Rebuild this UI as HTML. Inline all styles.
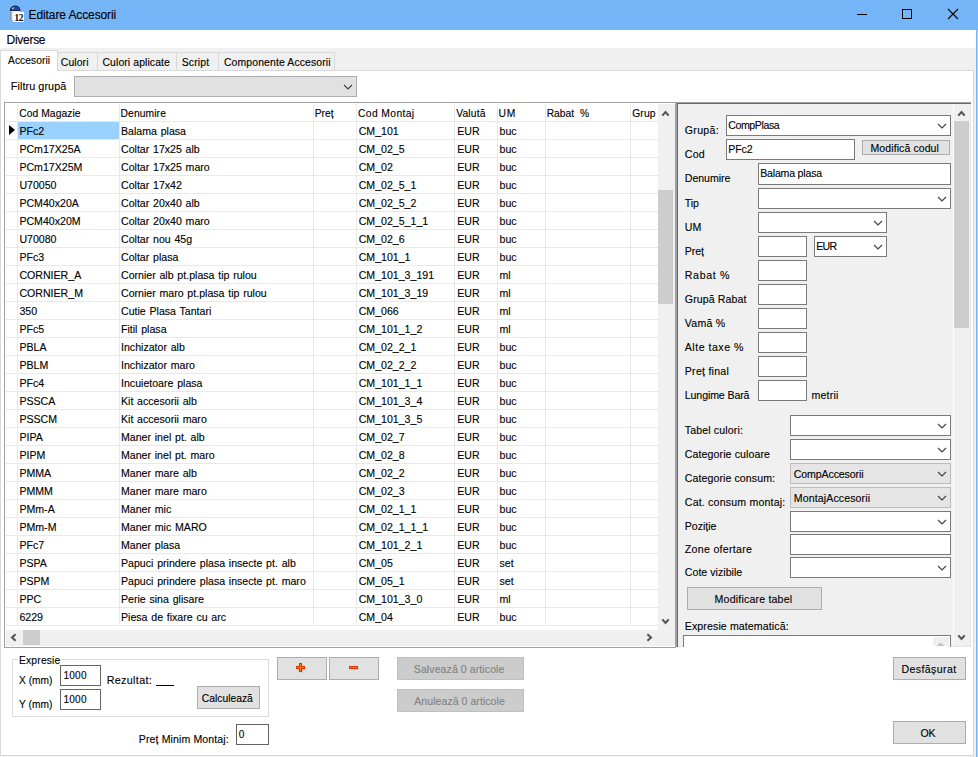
<!DOCTYPE html><html><head><meta charset="utf-8"><style>
html,body{margin:0;padding:0;}
body{width:978px;height:757px;overflow:hidden;position:relative;background:#f0f0f0;font-family:"Liberation Sans",sans-serif;}
.a{position:absolute;}
.t{position:absolute;white-space:nowrap;line-height:13px;-webkit-text-stroke:0.12px currentColor;}
</style></head><body>
<div class="a" style="left:976px;top:0px;width:1px;height:757px;background:#74b6f8"></div>
<div class="a" style="left:977px;top:0px;width:1px;height:757px;background:#cfcfcf"></div>
<div class="a" style="left:0px;top:0px;width:978px;height:30px;background:#74b6f8"></div>
<div class="t" style="left:28.60px;top:9px;font-size:12px;color:#000;letter-spacing:-0.109px;">Editare Accesorii</div>
<svg class="a" style="left:8px;top:4px" width="18" height="20" viewBox="0 0 18 20">
<rect x="4.9" y="7.9" width="11" height="10" fill="#ffffff"/>
<path d="M2.3 6.8 Q2.5 2 7.2 2 Q11.9 2 12 6.8 Z" fill="#1d43c4" stroke="#111" stroke-width="0.9"/>
<path d="M4.3 4.8 L5.8 3.6" stroke="#e0e8ff" stroke-width="1.1"/>
<rect x="2.3" y="7" width="9.7" height="1" fill="#e8e8e8"/>
<rect x="2.2" y="7.2" width="1.3" height="9.3" fill="#8a8a8a"/>
<rect x="3.5" y="8" width="2.5" height="8.3" fill="#cfe0f6"/>
<rect x="4.9" y="8" width="11" height="10" fill="#fff"/>
<text x="6.2" y="16.7" font-family="Liberation Serif" font-weight="bold" font-size="10" fill="#111" letter-spacing="-0.6">12</text>
</svg>
<div class="a" style="left:857px;top:14px;width:10px;height:1px;background:#000"></div>
<div class="a" style="left:902px;top:9px;width:10px;height:10px;border:1px solid #000;box-sizing:border-box"></div>
<svg class="a" style="left:947px;top:8px" width="12" height="12"><path d="M1 1 L11 11 M11 1 L1 11" stroke="#000" stroke-width="1.1"/></svg>
<div class="a" style="left:0px;top:30px;width:976px;height:18px;background:#fff"></div>
<div class="t" style="left:6.60px;top:34px;font-size:12px;color:#000;letter-spacing:-0.292px;">Diverse</div>
<div class="a" style="left:0px;top:70px;width:974px;height:686px;background:#fff;border:1px solid #d9d9d9;box-sizing:border-box"></div>
<div class="a" style="left:57px;top:52px;width:41px;height:19px;background:#f0f0f0;border:1px solid #d9d9d9;box-sizing:border-box"></div>
<div class="a" style="left:97px;top:52px;width:80px;height:19px;background:#f0f0f0;border:1px solid #d9d9d9;box-sizing:border-box"></div>
<div class="a" style="left:176px;top:52px;width:43px;height:19px;background:#f0f0f0;border:1px solid #d9d9d9;box-sizing:border-box"></div>
<div class="a" style="left:218px;top:52px;width:117px;height:19px;background:#f0f0f0;border:1px solid #d9d9d9;box-sizing:border-box"></div>
<div class="t" style="left:60.80px;top:56px;font-size:10.45px;color:#000;letter-spacing:0.090px;">Culori</div>
<div class="t" style="left:102.50px;top:56px;font-size:10.45px;color:#000;letter-spacing:0.086px;">Culori aplicate</div>
<div class="t" style="left:181.70px;top:56px;font-size:10.45px;color:#000;letter-spacing:0.170px;">Script</div>
<div class="t" style="left:223.90px;top:56px;font-size:10.45px;color:#000;letter-spacing:0.121px;">Componente Accesorii</div>
<div class="a" style="left:0px;top:50px;width:58px;height:21px;background:#fff;border:1px solid #d9d9d9;border-bottom:none;box-sizing:border-box"></div>
<div class="t" style="left:8.10px;top:54px;font-size:10.2px;color:#000;letter-spacing:0.069px;">Accesorii</div>
<div class="t" style="left:10.80px;top:80px;font-size:10.8px;color:#000;letter-spacing:0.077px;">Filtru grupă</div>
<div class="a" style="left:74px;top:76px;width:283px;height:21px;background:#e1e1e1;border:1px solid #adadad;box-sizing:border-box"></div>
<svg class="a" style="left:343.0px;top:84.0px" width="10" height="6"><path d="M1 1 L5.0 5 L9 1" fill="none" stroke="#404040" stroke-width="1.1"/></svg>
<div class="a" style="left:4px;top:102px;width:672px;height:546px;background:#fff;border:1px solid #a0a0a0;box-sizing:border-box"></div>
<div class="a" style="left:18px;top:122px;width:101px;height:17px;background:#99d1ff"></div>
<div class="a" style="left:6px;top:121px;width:652px;height:1px;background:#e9e9e9"></div>
<div class="a" style="left:6px;top:139px;width:652px;height:1px;background:#e9e9e9"></div>
<div class="a" style="left:6px;top:157px;width:652px;height:1px;background:#e9e9e9"></div>
<div class="a" style="left:6px;top:175px;width:652px;height:1px;background:#e9e9e9"></div>
<div class="a" style="left:6px;top:193px;width:652px;height:1px;background:#e9e9e9"></div>
<div class="a" style="left:6px;top:211px;width:652px;height:1px;background:#e9e9e9"></div>
<div class="a" style="left:6px;top:229px;width:652px;height:1px;background:#e9e9e9"></div>
<div class="a" style="left:6px;top:247px;width:652px;height:1px;background:#e9e9e9"></div>
<div class="a" style="left:6px;top:265px;width:652px;height:1px;background:#e9e9e9"></div>
<div class="a" style="left:6px;top:283px;width:652px;height:1px;background:#e9e9e9"></div>
<div class="a" style="left:6px;top:301px;width:652px;height:1px;background:#e9e9e9"></div>
<div class="a" style="left:6px;top:319px;width:652px;height:1px;background:#e9e9e9"></div>
<div class="a" style="left:6px;top:337px;width:652px;height:1px;background:#e9e9e9"></div>
<div class="a" style="left:6px;top:355px;width:652px;height:1px;background:#e9e9e9"></div>
<div class="a" style="left:6px;top:373px;width:652px;height:1px;background:#e9e9e9"></div>
<div class="a" style="left:6px;top:391px;width:652px;height:1px;background:#e9e9e9"></div>
<div class="a" style="left:6px;top:409px;width:652px;height:1px;background:#e9e9e9"></div>
<div class="a" style="left:6px;top:427px;width:652px;height:1px;background:#e9e9e9"></div>
<div class="a" style="left:6px;top:445px;width:652px;height:1px;background:#e9e9e9"></div>
<div class="a" style="left:6px;top:463px;width:652px;height:1px;background:#e9e9e9"></div>
<div class="a" style="left:6px;top:481px;width:652px;height:1px;background:#e9e9e9"></div>
<div class="a" style="left:6px;top:499px;width:652px;height:1px;background:#e9e9e9"></div>
<div class="a" style="left:6px;top:517px;width:652px;height:1px;background:#e9e9e9"></div>
<div class="a" style="left:6px;top:535px;width:652px;height:1px;background:#e9e9e9"></div>
<div class="a" style="left:6px;top:553px;width:652px;height:1px;background:#e9e9e9"></div>
<div class="a" style="left:6px;top:571px;width:652px;height:1px;background:#e9e9e9"></div>
<div class="a" style="left:6px;top:589px;width:652px;height:1px;background:#e9e9e9"></div>
<div class="a" style="left:6px;top:607px;width:652px;height:1px;background:#e9e9e9"></div>
<div class="a" style="left:6px;top:625px;width:652px;height:1px;background:#e9e9e9"></div>
<div class="a" style="left:17px;top:104px;width:1px;height:522px;background:#e9e9e9"></div>
<div class="a" style="left:119px;top:104px;width:1px;height:522px;background:#e9e9e9"></div>
<div class="a" style="left:313px;top:104px;width:1px;height:522px;background:#e9e9e9"></div>
<div class="a" style="left:356px;top:104px;width:1px;height:522px;background:#e9e9e9"></div>
<div class="a" style="left:454px;top:104px;width:1px;height:522px;background:#e9e9e9"></div>
<div class="a" style="left:497px;top:104px;width:1px;height:522px;background:#e9e9e9"></div>
<div class="a" style="left:545px;top:104px;width:1px;height:522px;background:#e9e9e9"></div>
<div class="a" style="left:630px;top:104px;width:1px;height:522px;background:#e9e9e9"></div>
<div class="t" style="left:19.20px;top:107px;font-size:10.3px;color:#000;letter-spacing:0.065px;">Cod Magazie</div>
<div class="t" style="left:120.50px;top:107px;font-size:10.3px;color:#000;letter-spacing:0.107px;">Denumire</div>
<div class="t" style="left:314.70px;top:107px;font-size:10.3px;color:#000;">Preț</div>
<div class="t" style="left:358.00px;top:107px;font-size:10.3px;color:#000;letter-spacing:0.389px;">Cod Montaj</div>
<div class="t" style="left:456.20px;top:107px;font-size:10.3px;color:#000;letter-spacing:0.150px;">Valută</div>
<div class="t" style="left:498.50px;top:107px;font-size:10.3px;color:#000;letter-spacing:0.750px;">UM</div>
<div class="t" style="left:546.70px;top:107px;font-size:10.3px;color:#000;word-spacing:3px;">Rabat %</div>
<div class="t" style="left:632.20px;top:107px;font-size:10.3px;color:#000;letter-spacing:0.167px;">Grup</div>
<div class="t" style="left:19.40px;top:125px;font-size:10.6px;color:#000;word-spacing:0.8px;">PFc2</div>
<div class="t" style="left:121.00px;top:125px;font-size:10.6px;color:#000;word-spacing:0.8px;">Balama plasa</div>
<div class="t" style="left:358.70px;top:125px;font-size:10.6px;color:#000;word-spacing:0.8px;">CM_101</div>
<div class="t" style="left:457.20px;top:125px;font-size:10.6px;color:#000;word-spacing:0.8px;">EUR</div>
<div class="t" style="left:499.50px;top:125px;font-size:10.6px;color:#000;word-spacing:0.8px;">buc</div>
<div class="t" style="left:19.40px;top:143px;font-size:10.6px;color:#000;word-spacing:0.8px;">PCm17X25A</div>
<div class="t" style="left:121.00px;top:143px;font-size:10.6px;color:#000;word-spacing:0.8px;">Coltar 17x25 alb</div>
<div class="t" style="left:358.70px;top:143px;font-size:10.6px;color:#000;word-spacing:0.8px;">CM_02_5</div>
<div class="t" style="left:457.20px;top:143px;font-size:10.6px;color:#000;word-spacing:0.8px;">EUR</div>
<div class="t" style="left:499.50px;top:143px;font-size:10.6px;color:#000;word-spacing:0.8px;">buc</div>
<div class="t" style="left:19.40px;top:161px;font-size:10.6px;color:#000;word-spacing:0.8px;">PCm17X25M</div>
<div class="t" style="left:121.00px;top:161px;font-size:10.6px;color:#000;word-spacing:0.8px;">Coltar 17x25 maro</div>
<div class="t" style="left:358.70px;top:161px;font-size:10.6px;color:#000;word-spacing:0.8px;">CM_02</div>
<div class="t" style="left:457.20px;top:161px;font-size:10.6px;color:#000;word-spacing:0.8px;">EUR</div>
<div class="t" style="left:499.50px;top:161px;font-size:10.6px;color:#000;word-spacing:0.8px;">buc</div>
<div class="t" style="left:19.40px;top:179px;font-size:10.6px;color:#000;word-spacing:0.8px;">U70050</div>
<div class="t" style="left:121.00px;top:179px;font-size:10.6px;color:#000;word-spacing:0.8px;">Coltar 17x42</div>
<div class="t" style="left:358.70px;top:179px;font-size:10.6px;color:#000;word-spacing:0.8px;">CM_02_5_1</div>
<div class="t" style="left:457.20px;top:179px;font-size:10.6px;color:#000;word-spacing:0.8px;">EUR</div>
<div class="t" style="left:499.50px;top:179px;font-size:10.6px;color:#000;word-spacing:0.8px;">buc</div>
<div class="t" style="left:19.40px;top:197px;font-size:10.6px;color:#000;word-spacing:0.8px;">PCM40x20A</div>
<div class="t" style="left:121.00px;top:197px;font-size:10.6px;color:#000;word-spacing:0.8px;">Coltar 20x40 alb</div>
<div class="t" style="left:358.70px;top:197px;font-size:10.6px;color:#000;word-spacing:0.8px;">CM_02_5_2</div>
<div class="t" style="left:457.20px;top:197px;font-size:10.6px;color:#000;word-spacing:0.8px;">EUR</div>
<div class="t" style="left:499.50px;top:197px;font-size:10.6px;color:#000;word-spacing:0.8px;">buc</div>
<div class="t" style="left:19.40px;top:215px;font-size:10.6px;color:#000;word-spacing:0.8px;">PCM40x20M</div>
<div class="t" style="left:121.00px;top:215px;font-size:10.6px;color:#000;word-spacing:0.8px;">Coltar 20x40 maro</div>
<div class="t" style="left:358.70px;top:215px;font-size:10.6px;color:#000;word-spacing:0.8px;">CM_02_5_1_1</div>
<div class="t" style="left:457.20px;top:215px;font-size:10.6px;color:#000;word-spacing:0.8px;">EUR</div>
<div class="t" style="left:499.50px;top:215px;font-size:10.6px;color:#000;word-spacing:0.8px;">buc</div>
<div class="t" style="left:19.40px;top:233px;font-size:10.6px;color:#000;word-spacing:0.8px;">U70080</div>
<div class="t" style="left:121.00px;top:233px;font-size:10.6px;color:#000;word-spacing:0.8px;">Coltar nou 45g</div>
<div class="t" style="left:358.70px;top:233px;font-size:10.6px;color:#000;word-spacing:0.8px;">CM_02_6</div>
<div class="t" style="left:457.20px;top:233px;font-size:10.6px;color:#000;word-spacing:0.8px;">EUR</div>
<div class="t" style="left:499.50px;top:233px;font-size:10.6px;color:#000;word-spacing:0.8px;">buc</div>
<div class="t" style="left:19.40px;top:251px;font-size:10.6px;color:#000;word-spacing:0.8px;">PFc3</div>
<div class="t" style="left:121.00px;top:251px;font-size:10.6px;color:#000;word-spacing:0.8px;">Coltar plasa</div>
<div class="t" style="left:358.70px;top:251px;font-size:10.6px;color:#000;word-spacing:0.8px;">CM_101_1</div>
<div class="t" style="left:457.20px;top:251px;font-size:10.6px;color:#000;word-spacing:0.8px;">EUR</div>
<div class="t" style="left:499.50px;top:251px;font-size:10.6px;color:#000;word-spacing:0.8px;">buc</div>
<div class="t" style="left:19.40px;top:269px;font-size:10.6px;color:#000;word-spacing:0.8px;">CORNIER_A</div>
<div class="t" style="left:121.00px;top:269px;font-size:10.6px;color:#000;word-spacing:0.8px;">Cornier alb pt.plasa tip rulou</div>
<div class="t" style="left:358.70px;top:269px;font-size:10.6px;color:#000;word-spacing:0.8px;">CM_101_3_191</div>
<div class="t" style="left:457.20px;top:269px;font-size:10.6px;color:#000;word-spacing:0.8px;">EUR</div>
<div class="t" style="left:499.50px;top:269px;font-size:10.6px;color:#000;word-spacing:0.8px;">ml</div>
<div class="t" style="left:19.40px;top:287px;font-size:10.6px;color:#000;word-spacing:0.8px;">CORNIER_M</div>
<div class="t" style="left:121.00px;top:287px;font-size:10.6px;color:#000;word-spacing:0.8px;">Cornier maro pt.plasa tip rulou</div>
<div class="t" style="left:358.70px;top:287px;font-size:10.6px;color:#000;word-spacing:0.8px;">CM_101_3_19</div>
<div class="t" style="left:457.20px;top:287px;font-size:10.6px;color:#000;word-spacing:0.8px;">EUR</div>
<div class="t" style="left:499.50px;top:287px;font-size:10.6px;color:#000;word-spacing:0.8px;">ml</div>
<div class="t" style="left:19.40px;top:305px;font-size:10.6px;color:#000;word-spacing:0.8px;">350</div>
<div class="t" style="left:121.00px;top:305px;font-size:10.6px;color:#000;word-spacing:0.8px;">Cutie Plasa Tantari</div>
<div class="t" style="left:358.70px;top:305px;font-size:10.6px;color:#000;word-spacing:0.8px;">CM_066</div>
<div class="t" style="left:457.20px;top:305px;font-size:10.6px;color:#000;word-spacing:0.8px;">EUR</div>
<div class="t" style="left:499.50px;top:305px;font-size:10.6px;color:#000;word-spacing:0.8px;">ml</div>
<div class="t" style="left:19.40px;top:323px;font-size:10.6px;color:#000;word-spacing:0.8px;">PFc5</div>
<div class="t" style="left:121.00px;top:323px;font-size:10.6px;color:#000;word-spacing:0.8px;">Fitil plasa</div>
<div class="t" style="left:358.70px;top:323px;font-size:10.6px;color:#000;word-spacing:0.8px;">CM_101_1_2</div>
<div class="t" style="left:457.20px;top:323px;font-size:10.6px;color:#000;word-spacing:0.8px;">EUR</div>
<div class="t" style="left:499.50px;top:323px;font-size:10.6px;color:#000;word-spacing:0.8px;">ml</div>
<div class="t" style="left:19.40px;top:341px;font-size:10.6px;color:#000;word-spacing:0.8px;">PBLA</div>
<div class="t" style="left:121.00px;top:341px;font-size:10.6px;color:#000;word-spacing:0.8px;">Inchizator alb</div>
<div class="t" style="left:358.70px;top:341px;font-size:10.6px;color:#000;word-spacing:0.8px;">CM_02_2_1</div>
<div class="t" style="left:457.20px;top:341px;font-size:10.6px;color:#000;word-spacing:0.8px;">EUR</div>
<div class="t" style="left:499.50px;top:341px;font-size:10.6px;color:#000;word-spacing:0.8px;">buc</div>
<div class="t" style="left:19.40px;top:359px;font-size:10.6px;color:#000;word-spacing:0.8px;">PBLM</div>
<div class="t" style="left:121.00px;top:359px;font-size:10.6px;color:#000;word-spacing:0.8px;">Inchizator maro</div>
<div class="t" style="left:358.70px;top:359px;font-size:10.6px;color:#000;word-spacing:0.8px;">CM_02_2_2</div>
<div class="t" style="left:457.20px;top:359px;font-size:10.6px;color:#000;word-spacing:0.8px;">EUR</div>
<div class="t" style="left:499.50px;top:359px;font-size:10.6px;color:#000;word-spacing:0.8px;">buc</div>
<div class="t" style="left:19.40px;top:377px;font-size:10.6px;color:#000;word-spacing:0.8px;">PFc4</div>
<div class="t" style="left:121.00px;top:377px;font-size:10.6px;color:#000;word-spacing:0.8px;">Incuietoare plasa</div>
<div class="t" style="left:358.70px;top:377px;font-size:10.6px;color:#000;word-spacing:0.8px;">CM_101_1_1</div>
<div class="t" style="left:457.20px;top:377px;font-size:10.6px;color:#000;word-spacing:0.8px;">EUR</div>
<div class="t" style="left:499.50px;top:377px;font-size:10.6px;color:#000;word-spacing:0.8px;">buc</div>
<div class="t" style="left:19.40px;top:395px;font-size:10.6px;color:#000;word-spacing:0.8px;">PSSCA</div>
<div class="t" style="left:121.00px;top:395px;font-size:10.6px;color:#000;word-spacing:0.8px;">Kit accesorii alb</div>
<div class="t" style="left:358.70px;top:395px;font-size:10.6px;color:#000;word-spacing:0.8px;">CM_101_3_4</div>
<div class="t" style="left:457.20px;top:395px;font-size:10.6px;color:#000;word-spacing:0.8px;">EUR</div>
<div class="t" style="left:499.50px;top:395px;font-size:10.6px;color:#000;word-spacing:0.8px;">buc</div>
<div class="t" style="left:19.40px;top:413px;font-size:10.6px;color:#000;word-spacing:0.8px;">PSSCM</div>
<div class="t" style="left:121.00px;top:413px;font-size:10.6px;color:#000;word-spacing:0.8px;">Kit accesorii maro</div>
<div class="t" style="left:358.70px;top:413px;font-size:10.6px;color:#000;word-spacing:0.8px;">CM_101_3_5</div>
<div class="t" style="left:457.20px;top:413px;font-size:10.6px;color:#000;word-spacing:0.8px;">EUR</div>
<div class="t" style="left:499.50px;top:413px;font-size:10.6px;color:#000;word-spacing:0.8px;">buc</div>
<div class="t" style="left:19.40px;top:431px;font-size:10.6px;color:#000;word-spacing:0.8px;">PIPA</div>
<div class="t" style="left:121.00px;top:431px;font-size:10.6px;color:#000;word-spacing:0.8px;">Maner inel pt. alb</div>
<div class="t" style="left:358.70px;top:431px;font-size:10.6px;color:#000;word-spacing:0.8px;">CM_02_7</div>
<div class="t" style="left:457.20px;top:431px;font-size:10.6px;color:#000;word-spacing:0.8px;">EUR</div>
<div class="t" style="left:499.50px;top:431px;font-size:10.6px;color:#000;word-spacing:0.8px;">buc</div>
<div class="t" style="left:19.40px;top:449px;font-size:10.6px;color:#000;word-spacing:0.8px;">PIPM</div>
<div class="t" style="left:121.00px;top:449px;font-size:10.6px;color:#000;word-spacing:0.8px;">Maner inel pt. maro</div>
<div class="t" style="left:358.70px;top:449px;font-size:10.6px;color:#000;word-spacing:0.8px;">CM_02_8</div>
<div class="t" style="left:457.20px;top:449px;font-size:10.6px;color:#000;word-spacing:0.8px;">EUR</div>
<div class="t" style="left:499.50px;top:449px;font-size:10.6px;color:#000;word-spacing:0.8px;">buc</div>
<div class="t" style="left:19.40px;top:467px;font-size:10.6px;color:#000;word-spacing:0.8px;">PMMA</div>
<div class="t" style="left:121.00px;top:467px;font-size:10.6px;color:#000;word-spacing:0.8px;">Maner mare alb</div>
<div class="t" style="left:358.70px;top:467px;font-size:10.6px;color:#000;word-spacing:0.8px;">CM_02_2</div>
<div class="t" style="left:457.20px;top:467px;font-size:10.6px;color:#000;word-spacing:0.8px;">EUR</div>
<div class="t" style="left:499.50px;top:467px;font-size:10.6px;color:#000;word-spacing:0.8px;">buc</div>
<div class="t" style="left:19.40px;top:485px;font-size:10.6px;color:#000;word-spacing:0.8px;">PMMM</div>
<div class="t" style="left:121.00px;top:485px;font-size:10.6px;color:#000;word-spacing:0.8px;">Maner mare maro</div>
<div class="t" style="left:358.70px;top:485px;font-size:10.6px;color:#000;word-spacing:0.8px;">CM_02_3</div>
<div class="t" style="left:457.20px;top:485px;font-size:10.6px;color:#000;word-spacing:0.8px;">EUR</div>
<div class="t" style="left:499.50px;top:485px;font-size:10.6px;color:#000;word-spacing:0.8px;">buc</div>
<div class="t" style="left:19.40px;top:503px;font-size:10.6px;color:#000;word-spacing:0.8px;">PMm-A</div>
<div class="t" style="left:121.00px;top:503px;font-size:10.6px;color:#000;word-spacing:0.8px;">Maner mic</div>
<div class="t" style="left:358.70px;top:503px;font-size:10.6px;color:#000;word-spacing:0.8px;">CM_02_1_1</div>
<div class="t" style="left:457.20px;top:503px;font-size:10.6px;color:#000;word-spacing:0.8px;">EUR</div>
<div class="t" style="left:499.50px;top:503px;font-size:10.6px;color:#000;word-spacing:0.8px;">buc</div>
<div class="t" style="left:19.40px;top:521px;font-size:10.6px;color:#000;word-spacing:0.8px;">PMm-M</div>
<div class="t" style="left:121.00px;top:521px;font-size:10.6px;color:#000;word-spacing:0.8px;">Maner mic MARO</div>
<div class="t" style="left:358.70px;top:521px;font-size:10.6px;color:#000;word-spacing:0.8px;">CM_02_1_1_1</div>
<div class="t" style="left:457.20px;top:521px;font-size:10.6px;color:#000;word-spacing:0.8px;">EUR</div>
<div class="t" style="left:499.50px;top:521px;font-size:10.6px;color:#000;word-spacing:0.8px;">buc</div>
<div class="t" style="left:19.40px;top:539px;font-size:10.6px;color:#000;word-spacing:0.8px;">PFc7</div>
<div class="t" style="left:121.00px;top:539px;font-size:10.6px;color:#000;word-spacing:0.8px;">Maner plasa</div>
<div class="t" style="left:358.70px;top:539px;font-size:10.6px;color:#000;word-spacing:0.8px;">CM_101_2_1</div>
<div class="t" style="left:457.20px;top:539px;font-size:10.6px;color:#000;word-spacing:0.8px;">EUR</div>
<div class="t" style="left:499.50px;top:539px;font-size:10.6px;color:#000;word-spacing:0.8px;">buc</div>
<div class="t" style="left:19.40px;top:557px;font-size:10.6px;color:#000;word-spacing:0.8px;">PSPA</div>
<div class="t" style="left:121.00px;top:557px;font-size:10.6px;color:#000;word-spacing:0.8px;">Papuci prindere plasa insecte pt. alb</div>
<div class="t" style="left:358.70px;top:557px;font-size:10.6px;color:#000;word-spacing:0.8px;">CM_05</div>
<div class="t" style="left:457.20px;top:557px;font-size:10.6px;color:#000;word-spacing:0.8px;">EUR</div>
<div class="t" style="left:499.50px;top:557px;font-size:10.6px;color:#000;word-spacing:0.8px;">set</div>
<div class="t" style="left:19.40px;top:575px;font-size:10.6px;color:#000;word-spacing:0.8px;">PSPM</div>
<div class="t" style="left:121.00px;top:575px;font-size:10.6px;color:#000;word-spacing:0.8px;">Papuci prindere plasa insecte pt. maro</div>
<div class="t" style="left:358.70px;top:575px;font-size:10.6px;color:#000;word-spacing:0.8px;">CM_05_1</div>
<div class="t" style="left:457.20px;top:575px;font-size:10.6px;color:#000;word-spacing:0.8px;">EUR</div>
<div class="t" style="left:499.50px;top:575px;font-size:10.6px;color:#000;word-spacing:0.8px;">set</div>
<div class="t" style="left:19.40px;top:593px;font-size:10.6px;color:#000;word-spacing:0.8px;">PPC</div>
<div class="t" style="left:121.00px;top:593px;font-size:10.6px;color:#000;word-spacing:0.8px;">Perie sina glisare</div>
<div class="t" style="left:358.70px;top:593px;font-size:10.6px;color:#000;word-spacing:0.8px;">CM_101_3_0</div>
<div class="t" style="left:457.20px;top:593px;font-size:10.6px;color:#000;word-spacing:0.8px;">EUR</div>
<div class="t" style="left:499.50px;top:593px;font-size:10.6px;color:#000;word-spacing:0.8px;">ml</div>
<div class="t" style="left:19.40px;top:611px;font-size:10.6px;color:#000;word-spacing:0.8px;">6229</div>
<div class="t" style="left:121.00px;top:611px;font-size:10.6px;color:#000;word-spacing:0.8px;">Piesa de fixare cu arc</div>
<div class="t" style="left:358.70px;top:611px;font-size:10.6px;color:#000;word-spacing:0.8px;">CM_04</div>
<div class="t" style="left:457.20px;top:611px;font-size:10.6px;color:#000;word-spacing:0.8px;">EUR</div>
<div class="t" style="left:499.50px;top:611px;font-size:10.6px;color:#000;word-spacing:0.8px;">buc</div>
<svg class="a" style="left:8px;top:124px" width="8" height="12"><path d="M1 1 L7 6 L1 11 Z" fill="#000"/></svg>
<div class="a" style="left:658px;top:104px;width:17px;height:542px;background:#f0f0f0"></div>
<div class="a" style="left:658px;top:190px;width:15px;height:114px;background:#cdcdcd"></div>
<svg class="a" style="left:661.0px;top:110.0px" width="9" height="7"><path d="M1.3 5.6 L4.5 2 L7.7 5.6" fill="none" stroke="#555" stroke-width="2.1"/></svg>
<svg class="a" style="left:661.0px;top:617.5px" width="9" height="7"><path d="M1.3 1.4 L4.5 5 L7.7 1.4" fill="none" stroke="#555" stroke-width="2.1"/></svg>
<div class="a" style="left:6px;top:630px;width:652px;height:16px;background:#f0f0f0"></div>
<div class="a" style="left:23px;top:630px;width:17px;height:15px;background:#cdcdcd"></div>
<svg class="a" style="left:10.0px;top:633.0px" width="7" height="9"><path d="M5.6 1.3 L2 4.5 L5.6 7.7" fill="none" stroke="#555" stroke-width="2.1"/></svg>
<svg class="a" style="left:645.5px;top:633.0px" width="7" height="9"><path d="M1.4 1.3 L5 4.5 L1.4 7.7" fill="none" stroke="#555" stroke-width="2.1"/></svg>
<div class="a" style="left:676px;top:102px;width:296px;height:546px;background:#f0f0f0"></div>
<div class="a" style="left:676px;top:102px;width:296px;height:1px;background:#a0a0a0"></div>
<div class="a" style="left:676px;top:102px;width:1px;height:546px;background:#a0a0a0"></div>
<div class="a" style="left:677px;top:103px;width:294px;height:1px;background:#696969"></div>
<div class="a" style="left:677px;top:103px;width:1px;height:544px;background:#696969"></div>
<div class="a" style="left:678px;top:646px;width:293px;height:1px;background:#e3e3e3"></div>
<div class="a" style="left:970px;top:104px;width:1px;height:543px;background:#e3e3e3"></div>
<div class="a" style="left:676px;top:647px;width:296px;height:1px;background:#fff"></div>
<div class="a" style="left:971px;top:102px;width:1px;height:546px;background:#fff"></div>
<div class="a" style="left:954px;top:104px;width:16px;height:542px;background:#f0f0f0"></div>
<div class="a" style="left:954px;top:121px;width:15px;height:207px;background:#cdcdcd"></div>
<svg class="a" style="left:957.0px;top:110.0px" width="9" height="7"><path d="M1.3 5.6 L4.5 2 L7.7 5.6" fill="none" stroke="#555" stroke-width="2.1"/></svg>
<svg class="a" style="left:957.0px;top:634.0px" width="9" height="7"><path d="M1.3 1.4 L4.5 5 L7.7 1.4" fill="none" stroke="#555" stroke-width="2.1"/></svg>
<div class="t" style="left:684.80px;top:124px;font-size:10.6px;color:#000;letter-spacing:0.300px;">Grupă:</div>
<div class="a" style="left:726px;top:115px;width:225px;height:21px;background:#fff;border:1px solid #7a7a7a;box-sizing:border-box"></div>
<svg class="a" style="left:936.5px;top:122.5px" width="10" height="6"><path d="M1 1 L5.0 5 L9 1" fill="none" stroke="#404040" stroke-width="1.1"/></svg>
<div class="t" style="left:728.20px;top:119px;font-size:10.6px;color:#000;letter-spacing:-0.406px;">CompPlasa</div>
<div class="t" style="left:684.80px;top:148px;font-size:10.6px;color:#000;letter-spacing:0.225px;">Cod</div>
<div class="a" style="left:726px;top:139px;width:129px;height:21px;background:#fff;border:1px solid #7a7a7a;box-sizing:border-box"></div>
<div class="t" style="left:728.20px;top:143px;font-size:10.6px;color:#000;letter-spacing:-0.083px;">PFc2</div>
<div class="a" style="left:862px;top:140px;width:88px;height:15px;background:#e1e1e1;border:1px solid #adadad;box-sizing:border-box"></div>
<div class="t" style="left:870.50px;top:142px;font-size:10.5px;color:#000;letter-spacing:0.096px;">Modifică codul</div>
<div class="t" style="left:684.80px;top:172px;font-size:10.6px;color:#000;letter-spacing:-0.050px;">Denumire</div>
<div class="a" style="left:758px;top:163px;width:193px;height:22px;background:#fff;border:1px solid #7a7a7a;box-sizing:border-box"></div>
<div class="t" style="left:760.20px;top:167px;font-size:10.6px;color:#000;letter-spacing:-0.205px;">Balama plasa</div>
<div class="t" style="left:684.80px;top:197px;font-size:10.6px;color:#000;letter-spacing:-0.075px;">Tip</div>
<div class="a" style="left:758px;top:188px;width:193px;height:21px;background:#fff;border:1px solid #7a7a7a;box-sizing:border-box"></div>
<svg class="a" style="left:936.5px;top:195.5px" width="10" height="6"><path d="M1 1 L5.0 5 L9 1" fill="none" stroke="#404040" stroke-width="1.1"/></svg>
<div class="t" style="left:684.80px;top:221px;font-size:10.6px;color:#000;letter-spacing:0.000px;">UM</div>
<div class="a" style="left:758px;top:212px;width:129px;height:21px;background:#fff;border:1px solid #7a7a7a;box-sizing:border-box"></div>
<svg class="a" style="left:872.5px;top:219.5px" width="10" height="6"><path d="M1 1 L5.0 5 L9 1" fill="none" stroke="#404040" stroke-width="1.1"/></svg>
<div class="t" style="left:684.80px;top:245px;font-size:10.6px;color:#000;letter-spacing:-0.083px;">Preț</div>
<div class="a" style="left:758px;top:236px;width:49px;height:21px;background:#fff;border:1px solid #7a7a7a;box-sizing:border-box"></div>
<div class="a" style="left:814px;top:236px;width:73px;height:21px;background:#fff;border:1px solid #7a7a7a;box-sizing:border-box"></div>
<svg class="a" style="left:872.5px;top:243.5px" width="10" height="6"><path d="M1 1 L5.0 5 L9 1" fill="none" stroke="#404040" stroke-width="1.1"/></svg>
<div class="t" style="left:816.20px;top:240px;font-size:10.6px;color:#000;letter-spacing:-0.750px;">EUR</div>
<div class="t" style="left:684.80px;top:269px;font-size:10.6px;color:#000;letter-spacing:0.650px;">Rabat %</div>
<div class="a" style="left:758px;top:260px;width:49px;height:21px;background:#fff;border:1px solid #7a7a7a;box-sizing:border-box"></div>
<div class="t" style="left:684.80px;top:293px;font-size:10.6px;color:#000;letter-spacing:0.100px;">Grupă Rabat</div>
<div class="a" style="left:758px;top:284px;width:49px;height:21px;background:#fff;border:1px solid #7a7a7a;box-sizing:border-box"></div>
<div class="t" style="left:684.80px;top:317px;font-size:10.6px;color:#000;letter-spacing:0.210px;">Vamă %</div>
<div class="a" style="left:758px;top:308px;width:49px;height:21px;background:#fff;border:1px solid #7a7a7a;box-sizing:border-box"></div>
<div class="t" style="left:684.80px;top:341px;font-size:10.6px;color:#000;letter-spacing:0.500px;">Alte taxe %</div>
<div class="a" style="left:758px;top:332px;width:49px;height:21px;background:#fff;border:1px solid #7a7a7a;box-sizing:border-box"></div>
<div class="t" style="left:684.80px;top:365px;font-size:10.6px;color:#000;letter-spacing:0.250px;">Preț final</div>
<div class="a" style="left:758px;top:356px;width:49px;height:21px;background:#fff;border:1px solid #7a7a7a;box-sizing:border-box"></div>
<div class="t" style="left:684.80px;top:389px;font-size:10.6px;color:#000;letter-spacing:-0.114px;">Lungime Bară</div>
<div class="a" style="left:758px;top:380px;width:49px;height:21px;background:#fff;border:1px solid #7a7a7a;box-sizing:border-box"></div>
<div class="t" style="left:811.50px;top:389px;font-size:10.6px;color:#000;letter-spacing:0.200px;">metrii</div>
<div class="t" style="left:684.80px;top:424px;font-size:10.6px;color:#000;letter-spacing:0.129px;">Tabel culori:</div>
<div class="a" style="left:790px;top:415px;width:161px;height:21px;background:#fff;border:1px solid #7a7a7a;box-sizing:border-box"></div>
<svg class="a" style="left:936.5px;top:422.5px" width="10" height="6"><path d="M1 1 L5.0 5 L9 1" fill="none" stroke="#404040" stroke-width="1.1"/></svg>
<div class="t" style="left:684.80px;top:448px;font-size:10.6px;color:#000;letter-spacing:0.097px;">Categorie culoare</div>
<div class="a" style="left:790px;top:439px;width:161px;height:21px;background:#fff;border:1px solid #7a7a7a;box-sizing:border-box"></div>
<svg class="a" style="left:936.5px;top:446.5px" width="10" height="6"><path d="M1 1 L5.0 5 L9 1" fill="none" stroke="#404040" stroke-width="1.1"/></svg>
<div class="t" style="left:684.80px;top:472px;font-size:10.6px;color:#000;letter-spacing:0.081px;">Categorie consum:</div>
<div class="a" style="left:790px;top:463px;width:161px;height:21px;background:#e5e5e5;border:1px solid #bcbcbc;box-sizing:border-box"></div>
<svg class="a" style="left:936.5px;top:470.5px" width="10" height="6"><path d="M1 1 L5.0 5 L9 1" fill="none" stroke="#404040" stroke-width="1.1"/></svg>
<div class="t" style="left:793.80px;top:468px;font-size:10.6px;color:#000;letter-spacing:-0.125px;">CompAccesorii</div>
<div class="t" style="left:684.80px;top:496px;font-size:10.6px;color:#000;letter-spacing:0.186px;">Cat. consum montaj:</div>
<div class="a" style="left:790px;top:487px;width:161px;height:21px;background:#e5e5e5;border:1px solid #bcbcbc;box-sizing:border-box"></div>
<svg class="a" style="left:936.5px;top:494.5px" width="10" height="6"><path d="M1 1 L5.0 5 L9 1" fill="none" stroke="#404040" stroke-width="1.1"/></svg>
<div class="t" style="left:793.80px;top:492px;font-size:10.6px;color:#000;letter-spacing:0.107px;">MontajAccesorii</div>
<div class="t" style="left:684.80px;top:520px;font-size:10.6px;color:#000;letter-spacing:-0.025px;">Poziție</div>
<div class="a" style="left:790px;top:511px;width:161px;height:21px;background:#fff;border:1px solid #7a7a7a;box-sizing:border-box"></div>
<svg class="a" style="left:936.5px;top:518.5px" width="10" height="6"><path d="M1 1 L5.0 5 L9 1" fill="none" stroke="#404040" stroke-width="1.1"/></svg>
<div class="t" style="left:684.80px;top:543px;font-size:10.6px;color:#000;letter-spacing:0.300px;">Zone ofertare</div>
<div class="a" style="left:790px;top:534px;width:161px;height:21px;background:#fff;border:1px solid #7a7a7a;box-sizing:border-box"></div>
<div class="t" style="left:684.80px;top:566px;font-size:10.6px;color:#000;letter-spacing:0.029px;">Cote vizibile</div>
<div class="a" style="left:790px;top:557px;width:161px;height:21px;background:#fff;border:1px solid #7a7a7a;box-sizing:border-box"></div>
<svg class="a" style="left:936.5px;top:564.5px" width="10" height="6"><path d="M1 1 L5.0 5 L9 1" fill="none" stroke="#404040" stroke-width="1.1"/></svg>
<div class="a" style="left:687px;top:587px;width:135px;height:23px;background:#e1e1e1;border:1px solid #adadad;box-sizing:border-box"></div>
<div class="t" style="left:714.60px;top:593px;font-size:10.6px;color:#000;letter-spacing:0.180px;">Modificare tabel</div>
<div class="t" style="left:684.80px;top:620px;font-size:10.6px;color:#000;letter-spacing:0.103px;">Expresie matematică:</div>
<div class="a" style="left:683px;top:635px;width:268px;height:12px;background:#fff;border:1px solid #7a7a7a;border-bottom:none;box-sizing:border-box"></div>
<div class="a" style="left:933px;top:637px;width:16px;height:9px;background:#f0f0f0"></div>
<svg class="a" style="left:936px;top:642px" width="9" height="4"><path d="M0.5 4 L4.5 0.5 L8.5 4 Z" fill="#c2c2c2"/></svg>
<div class="a" style="left:953px;top:104px;width:1px;height:542px;background:#fcfcfc"></div>
<div class="a" style="left:12px;top:659px;width:257px;height:58px;border:1px solid #dcdcdc;box-sizing:border-box"></div>
<div class="a" style="left:18px;top:655px;width:43px;height:11px;background:#fff"></div>
<div class="t" style="left:19.00px;top:654px;font-size:10.3px;color:#000;letter-spacing:0.179px;">Expresie</div>
<div class="t" style="left:19.00px;top:674px;font-size:10.2px;color:#000;letter-spacing:0.000px;">X (mm)</div>
<div class="t" style="left:19.00px;top:698px;font-size:10.2px;color:#000;letter-spacing:0.050px;">Y (mm)</div>
<div class="a" style="left:60px;top:665px;width:41px;height:21px;background:#fff;border:1px solid #646464;box-sizing:border-box"></div>
<div class="a" style="left:60px;top:689px;width:41px;height:21px;background:#fff;border:1px solid #646464;box-sizing:border-box"></div>
<div class="t" style="left:63.50px;top:669px;font-size:10.0px;color:#000;letter-spacing:0.250px;">1000</div>
<div class="t" style="left:63.50px;top:693px;font-size:10.0px;color:#000;letter-spacing:0.250px;">1000</div>
<div class="t" style="left:106.70px;top:674px;font-size:10.8px;color:#000;letter-spacing:0.306px;">Rezultat:</div>
<div class="a" style="left:156px;top:685px;width:18px;height:1px;background:#000"></div>
<div class="a" style="left:197px;top:686px;width:63px;height:23px;background:#e1e1e1;border:1px solid #adadad;box-sizing:border-box"></div>
<div class="t" style="left:201.80px;top:692px;font-size:10.3px;color:#000;letter-spacing:0.011px;">Calculează</div>
<div class="t" style="left:138.80px;top:733px;font-size:10.55px;color:#000;letter-spacing:0.115px;">Preț Minim Montaj:</div>
<div class="a" style="left:236px;top:724px;width:33px;height:21px;background:#fff;border:1px solid #646464;box-sizing:border-box"></div>
<div class="t" style="left:238.80px;top:728px;font-size:10.0px;color:#000;">0</div>
<div class="a" style="left:277px;top:657px;width:50px;height:23px;background:#e1e1e1;border:1px solid #adadad;box-sizing:border-box"></div>
<div class="a" style="left:329px;top:657px;width:50px;height:23px;background:#e1e1e1;border:1px solid #adadad;box-sizing:border-box"></div>
<div class="a" style="left:297px;top:667px;width:9px;height:4px;background:rgba(80,110,130,0.15)"></div>
<div class="a" style="left:300px;top:664px;width:3px;height:9px;background:rgba(80,110,130,0.15)"></div>
<div class="a" style="left:296px;top:666px;width:9px;height:3px;background:#d53a00"></div>
<div class="a" style="left:299px;top:663px;width:3px;height:9px;background:#d53a00"></div>
<div class="a" style="left:297px;top:667px;width:7px;height:1px;background:#ff7a14"></div>
<div class="a" style="left:300px;top:664px;width:1px;height:7px;background:#ff7a14"></div>
<div class="a" style="left:350px;top:667px;width:9px;height:3px;background:rgba(80,110,130,0.15)"></div>
<div class="a" style="left:349px;top:666px;width:9px;height:3px;background:#d53a00"></div>
<div class="a" style="left:350px;top:667px;width:7px;height:1px;background:#ff7a14"></div>
<div class="a" style="left:397px;top:657px;width:127px;height:23px;background:#cccccc;border:1px solid #bfbfbf;box-sizing:border-box"></div>
<div class="t" style="left:413.80px;top:663px;font-size:10.55px;color:#838383;letter-spacing:0.081px;">Salvează 0 articole</div>
<div class="a" style="left:397px;top:689px;width:127px;height:23px;background:#cccccc;border:1px solid #bfbfbf;box-sizing:border-box"></div>
<div class="t" style="left:414.30px;top:695px;font-size:10.55px;color:#838383;letter-spacing:0.042px;">Anulează 0 articole</div>
<div class="a" style="left:893px;top:657px;width:73px;height:23px;background:#e1e1e1;border:1px solid #adadad;box-sizing:border-box"></div>
<div class="t" style="left:901.50px;top:663px;font-size:10.6px;color:#000;letter-spacing:0.378px;">Desfășurat</div>
<div class="a" style="left:893px;top:721px;width:73px;height:23px;background:#e1e1e1;border:1px solid #adadad;box-sizing:border-box"></div>
<div class="t" style="left:920.50px;top:727px;font-size:10.6px;color:#000;letter-spacing:-0.200px;">OK</div>
</body></html>
